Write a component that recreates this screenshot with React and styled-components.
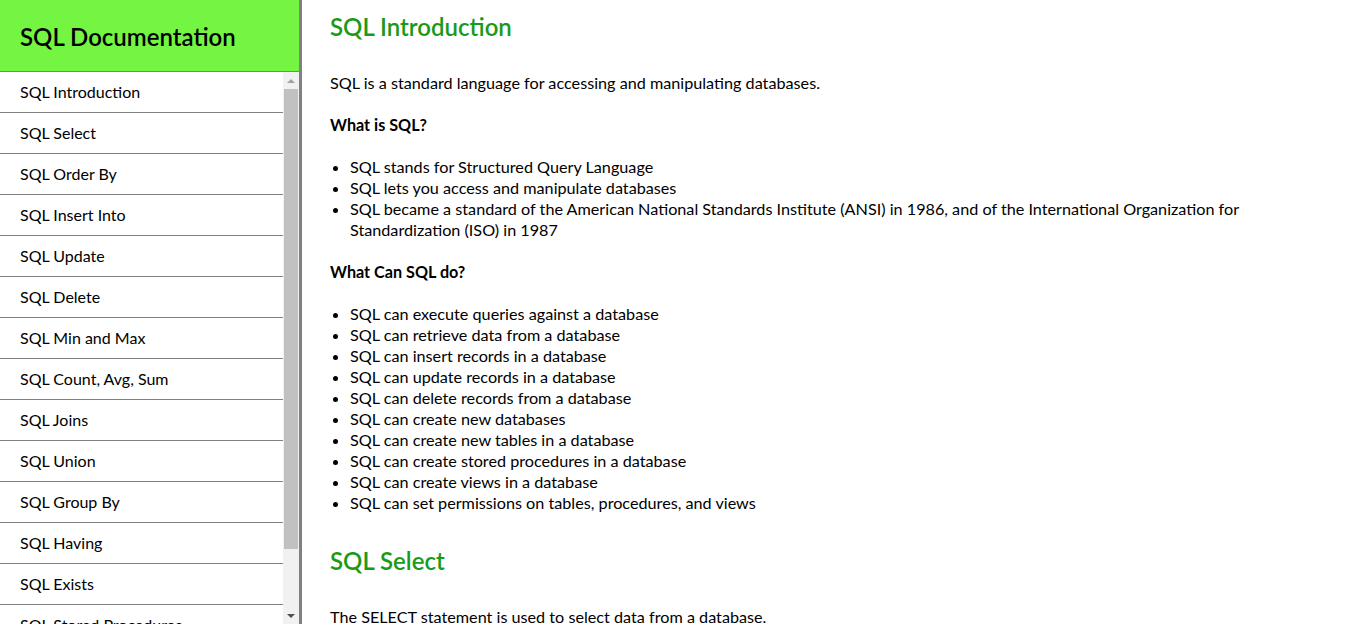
import styled, { createGlobalStyle } from "styled-components";

const topics = [
  "SQL Introduction",
  "SQL Select",
  "SQL Order By",
  "SQL Insert Into",
  "SQL Update",
  "SQL Delete",
  "SQL Min and Max",
  "SQL Count, Avg, Sum",
  "SQL Joins",
  "SQL Union",
  "SQL Group By",
  "SQL Having",
  "SQL Exists",
  "SQL Stored Procedures",
  "SQL Comments",
];

const whatIs = [
  "SQL stands for Structured Query Language",
  "SQL lets you access and manipulate databases",
  "SQL became a standard of the American National Standards Institute (ANSI) in 1986, and of the International Organization for Standardization (ISO) in 1987",
];

const canDo = [
  "SQL can execute queries against a database",
  "SQL can retrieve data from a database",
  "SQL can insert records in a database",
  "SQL can update records in a database",
  "SQL can delete records from a database",
  "SQL can create new databases",
  "SQL can create new tables in a database",
  "SQL can create stored procedures in a database",
  "SQL can create views in a database",
  "SQL can set permissions on tables, procedures, and views",
];

function App() {
  return (
    <>
      <GlobalStyle />
      <Page>
        <Sidebar>
          <Header>
            <h1>SQL Documentation</h1>
          </Header>
          <NavArea>
            <Nav>
              {topics.map((t) => (
                <NavLink key={t} href={`#${t.replace(/\W+/g, "_")}`}>
                  {t}
                </NavLink>
              ))}
            </Nav>
            <ScrollBar>
              <ArrowButton $dir="up" />
              <Track>
                <Thumb />
              </Track>
              <ArrowButton $dir="down" />
            </ScrollBar>
          </NavArea>
        </Sidebar>

        <Main>
          <Section id="SQL_Introduction">
            <Title>SQL Introduction</Title>
            <p>SQL is a standard language for accessing and manipulating databases.</p>
            <p>
              <b>What is SQL?</b>
            </p>
            <List>
              {whatIs.map((t) => (
                <li key={t}>{t}</li>
              ))}
            </List>
            <p>
              <b>What Can SQL do?</b>
            </p>
            <List>
              {canDo.map((t) => (
                <li key={t}>{t}</li>
              ))}
            </List>
          </Section>

          <Section id="SQL_Select">
            <Title>SQL Select</Title>
            <p>The SELECT statement is used to select data from a database.</p>
          </Section>
        </Main>
      </Page>
    </>
  );
}

export default App;

const GlobalStyle = createGlobalStyle`
  html, body {
    margin: 0;
    padding: 0;
    background: #fff;
    color: #000;
    font-family: Lato, "Open Sans", sans-serif;
    font-size: 16px;
    overflow: hidden;
  }
`;

const Page = styled.div`
  display: flex;
  height: 100vh;
  overflow: hidden;
`;

const Sidebar = styled.aside`
  display: flex;
  flex-direction: column;
  width: 299px;
  flex-shrink: 0;
  border-right: 3px solid #808080;
`;

const Header = styled.header`
  height: 72px;
  box-sizing: border-box;
  display: flex;
  align-items: center;
  padding: 2px 20px 0;
  background: #74f542;
  border-bottom: 1px solid #808080;
  flex-shrink: 0;

  h1 {
    margin: 0;
    font-size: 24px;
    font-weight: 600;
  }
`;

const NavArea = styled.div`
  flex: 1;
  min-height: 0;
  display: flex;
`;

const Nav = styled.nav`
  flex: 1;
  display: flex;
  flex-direction: column;
  overflow: hidden;
`;

const NavLink = styled.a`
  flex-shrink: 0;
  display: flex;
  align-items: center;
  padding: 0 20px 2px;
  height: 38px;
  border-bottom: 1px solid #808080;
  color: #000;
  text-decoration: none;
  white-space: nowrap;
`;

const ScrollBar = styled.div`
  width: 16px;
  display: flex;
  flex-direction: column;
  background: #f1f1f1;
`;

const ArrowButton = styled.div`
  height: 17px;
  flex-shrink: 0;
  display: flex;
  justify-content: center;
  align-items: center;

  &::before {
    content: "";
    border-left: 4px solid transparent;
    border-right: 4px solid transparent;
    ${({ $dir }) =>
      $dir === "up"
        ? "border-bottom: 4px solid #a3a3a3;"
        : "border-top: 4px solid #505050;"}
  }
`;

const Track = styled.div`
  flex: 1;
  display: flex;
  flex-direction: column;
  padding: 0 1px;
`;

const Thumb = styled.div`
  height: 460px;
  background: #c1c1c1;
`;

const Main = styled.main`
  flex: 1;
  display: flex;
  flex-direction: column;
  gap: 11px;
  padding: 11px 28px;
  overflow: hidden;
  font-size: 16.2px;
  line-height: 21px;

  p {
    margin: 0 0 21px;
  }
`;

const Section = styled.section`
  flex-shrink: 0;
`;

const Title = styled.h2`
  margin: 0 0 29px;
  font-size: 24px;
  line-height: 32px;
  font-weight: 600;
  color: #1a9a1a;
`;

const List = styled.ul`
  margin: 0 0 21px;
  padding-left: 20px;
`;
